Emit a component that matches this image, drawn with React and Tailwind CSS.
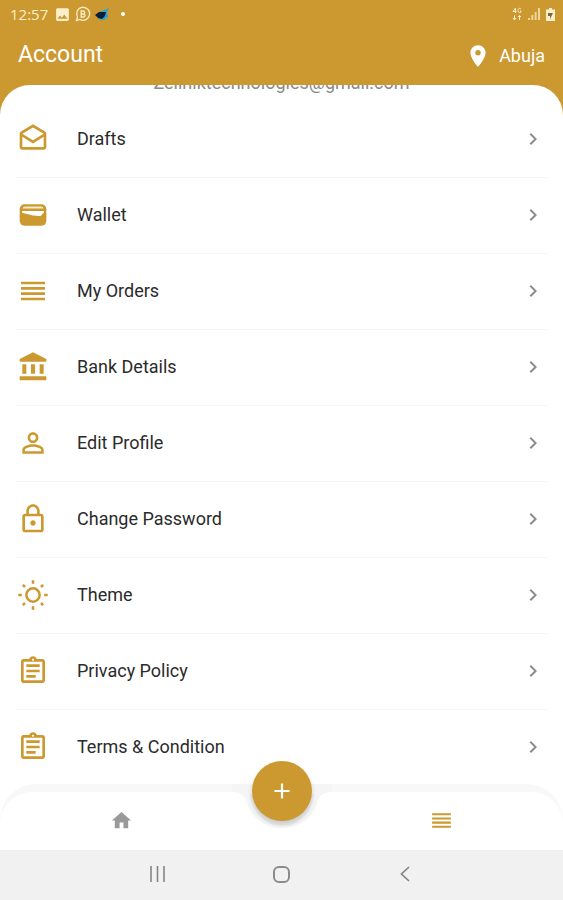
import React from "react";
import {
  MdAccountBalance,
  MdAdd,
  MdChevronRight,
  MdHome,
  MdImage,
  MdLocationOn,
  MdLockOutline,
  MdOutlineAssignment,
  MdOutlineDrafts,
  MdPersonOutline,
  MdReorder,
} from "react-icons/md";

function WalletIcon({ size = 24, className }) {
  return (
    <svg width={size} height={size} viewBox="0 0 24 24" className={className} aria-hidden="true">
      <rect x="2" y="4" width="20" height="16" rx="3.6" fill="currentColor" />
      <path d="M4 7.200c.4-.9 1.100-1.500 2.200-1.500h11.600c1.100 0 1.800.6 2.200 1.500z" fill="#fff" opacity=".8" />
      <path d="M3.800 9h16.400v1.400c-.6.2-1 .6-1.400 1.200-.5.9-1.300 1.300-2.400 1.200L12 12.400 3.800 10.400z" fill="#fff" />
    </svg>
  );
}

function SunIcon({ size = 24, className }) {
  return (
    <svg
      width={size}
      height={size}
      viewBox="0 0 24 24"
      fill="none"
      stroke="currentColor"
      strokeWidth="1.9"
      className={className}
      aria-hidden="true"
    >
      <circle cx="12" cy="12" r="5" />
      <path d="M12 1v2.600M12 20.400V23M1 12h2.600M20.400 12H23M4.400 4.400l1.600 1.600M18 18l1.600 1.600M4.400 19.600L6 18M18 6l1.600-1.600" />
    </svg>
  );
}

const items = [
  { label: "Drafts", icon: MdOutlineDrafts },
  { label: "Wallet", icon: WalletIcon },
  { label: "My Orders", icon: MdReorder },
  { label: "Bank Details", icon: MdAccountBalance },
  { label: "Edit Profile", icon: MdPersonOutline },
  { label: "Change Password", icon: MdLockOutline },
  { label: "Theme", icon: SunIcon },
  { label: "Privacy Policy", icon: MdOutlineAssignment },
  { label: "Terms & Condition", icon: MdOutlineAssignment },
];

function StatusBar() {
  return (
    <div className="flex h-7 items-center justify-between pl-2.5 pr-2 text-[#fbeecb]">
      <div className="flex items-center gap-1">
        <span className="font-['Open_Sans',sans-serif] text-[15px] leading-6">12:57</span>
        <MdImage size={17} className="ml-0.5" />
        <svg width="16" height="16" viewBox="0 0 16 16" fill="none" stroke="currentColor" strokeWidth="1.300" aria-hidden="true">
          <path d="M1.500 14.500l1-3.500a6.500 6.500 0 1 1 2.500 2.500z" />
          <path d="M6.200 5v6h2.300a1.500 1.500 0 0 0 0-3H6.200h2a1.500 1.500 0 0 0 0-3z" />
        </svg>
        <svg width="14" height="12" viewBox="0 0 14 12" aria-hidden="true">
          <path d="M4 4l10-4-2 4 1 5-4 3-6-1z" fill="#2aa5cf" />
          <path d="M0 7l4-3h7l-1 4-3 3-4-1z" fill="#0b1f3d" />
        </svg>
        <span className="ml-2 size-1 rounded-full bg-white" />
      </div>
      <div className="flex items-center gap-1.5">
        <svg width="10" height="14" viewBox="0 0 10 14" fill="none" stroke="currentColor" aria-hidden="true">
          <path d="M3.500 6V1L1 4.500h3.500M9 2.200C7.500.5 6 1.500 6 3.500s2 3 3 1.500V4H8M2.500 13V8.500M1 11l1.500 2L4 11M7.500 13V8.500M6 10l1.500-1.500L9 10" />
        </svg>
        <svg width="12" height="12" viewBox="0 0 12 12" fill="currentColor" aria-hidden="true">
          <path d="M0 10h2v2H0zM3.300 7h2v5h-2zM6.600 4h2v8h-2zM10 0h2v12h-2z" opacity=".7" />
        </svg>
        <svg width="9" height="13" viewBox="0 0 9 13" aria-hidden="true">
          <path d="M3 0h3v1.500h3V13H0V1.500h3z" fill="currentColor" />
          <path d="M2 5h5L4 11V8H2z" fill="#7c6a3c" />
        </svg>
      </div>
    </div>
  );
}

function TopBar() {
  return (
    <header className="flex h-[57px] items-center justify-between px-[18px] pb-0.5 text-white">
      <h1 className="text-[23px]">Account</h1>
      <button type="button" className="flex items-center gap-2 text-[18px]">
        <MdLocationOn size={26} />
        Abuja
      </button>
    </header>
  );
}

function MenuRow({ label, icon: Icon }) {
  return (
    <li>
      <a href="#" className="flex h-[75px] items-center pb-0.5 pl-px pr-0.5">
        <Icon size={32} className="shrink-0 text-[#cb992f]" />
        <span className="ml-7 flex-1 text-[18px] text-[#2b2b2b]">{label}</span>
        <MdChevronRight size={24} className="text-[#8c8c8c]" />
      </a>
    </li>
  );
}

function BottomNav() {
  return (
    <nav className="relative z-10 bg-white">
      <div className="rounded-t-[36px] bg-[#f8f8f8] pt-2">
        <div className="flex h-[58px] items-center rounded-t-[32px] bg-white pb-0.5">
          <a href="#" aria-label="Home" className="flex flex-1 justify-center pr-[38px] text-[#999]">
            <MdHome size={23} />
          </a>
          <a href="#" aria-label="Account" className="flex flex-1 justify-center pl-[38px] text-[#cb992f]">
            <MdReorder size={25} />
          </a>
        </div>
      </div>
      {/* notch under the floating button */}
      <svg
        width="100"
        height="44"
        viewBox="0 0 100 44"
        className="absolute left-1/2 top-0 -translate-x-1/2"
        aria-hidden="true"
      >
        <path d="M0 0h100v8c-8 0-12 3-14 8C82 33 68 44 50 44S18 33 14 16C12 11 8 8 0 8z" fill="#f5f5f5" />
        <path d="M18 10h64C80 29 66 42 50 42S20 29 18 10z" fill="#ebebeb" />
      </svg>
      <button
        type="button"
        aria-label="Add"
        className="absolute -top-[23px] left-1/2 flex size-[60px] -translate-x-1/2 items-center justify-center rounded-full bg-[#cb992f] text-white shadow-[0_3px_5px_rgba(0,0,0,0.15)]"
      >
        <MdAdd size={26} />
      </button>
    </nav>
  );
}

function SystemNav() {
  return (
    <div className="flex h-[50px] justify-center bg-[#f1f1f1] pb-0.5">
      <button type="button" aria-label="Recent apps" className="flex w-[22%] items-center justify-center">
        <svg width="17" height="16" viewBox="0 0 17 16" stroke="#858585" strokeWidth="1.600" aria-hidden="true">
          <path d="M2 0v16M8.500 0v16M15 0v16" />
        </svg>
      </button>
      <button type="button" aria-label="Home screen" className="flex w-[22%] items-center justify-center">
        <span className="size-[17px] rounded-md border-2 border-[#8c8c8c]" />
      </button>
      <button type="button" aria-label="Back" className="flex w-[22%] items-center justify-center">
        <svg width="10" height="16" viewBox="0 0 10 16" fill="none" stroke="#858585" strokeWidth="1.700" aria-hidden="true">
          <path d="M9 1L1.500 8 9 15" />
        </svg>
      </button>
    </div>
  );
}

export default function App() {
  return (
    <div className="flex h-screen flex-col bg-[#cb992f] font-[Roboto,sans-serif]">
      <StatusBar />
      <TopBar />
      <main className="min-h-0 flex-1 overflow-hidden rounded-t-[30px] bg-white">
        {/* email is scrolled mostly out of view */}
        <div className="flex h-[17px] items-start justify-center">
          <p className="-mt-3 text-[18px] leading-5 text-[#8a8a8a]">Zellniktechnologies@gmail.com</p>
        </div>
        <ul className="divide-y divide-[#f4f4f4] px-4">
          {items.map((item) => (
            <MenuRow key={item.label} {...item} />
          ))}
        </ul>
      </main>
      <BottomNav />
      <SystemNav />
    </div>
  );
}
